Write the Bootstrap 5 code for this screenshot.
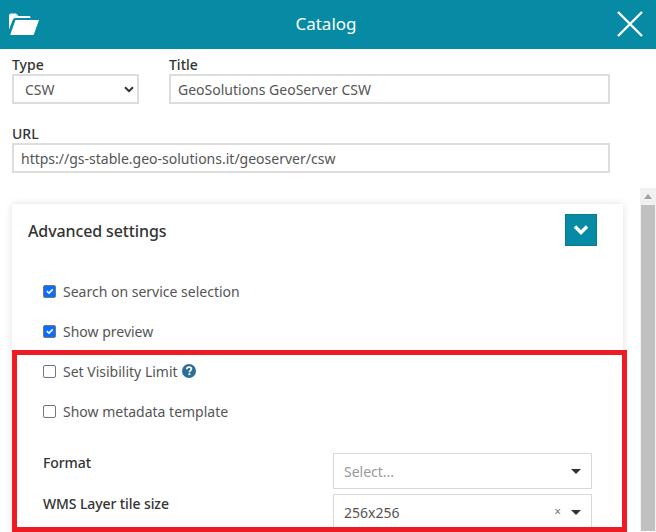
<!DOCTYPE html>
<html lang="en">
<head>
  <meta charset="UTF-8">
  <meta name="viewport" content="width=device-width, initial-scale=1.0">
  <title>Catalog</title>
  <link href="https://cdn.jsdelivr.net/npm/bootstrap@5.3.0/dist/css/bootstrap.min.css" rel="stylesheet">
  <style>
    html, body {
      height: 532px;
      overflow: hidden;
    }
    body {
      font-family: "Noto Sans", sans-serif;
      font-size: 14px;
      color: #333;
      background-color: #fff;
    }
    .cat-page {
      height: 532px;
      overflow: hidden;
    }
    .cat-header {
      height: 49px;
      background-color: #078aa3;
      color: #fff;
      font-size: 17px;
      padding: 0 12px 0 9px;
    }
    .cat-header svg {
      display: block;
      flex: none;
      margin-bottom: 1px;
    }
    .cat-header-title {
      flex: 1;
      text-align: center;
      padding-bottom: 2px;
      margin-left: -3px;
    }
    .cat-form {
      padding: 6px 46px 0 12px;
    }
    .cat-label {
      font-weight: 500;
      line-height: 19px;
      margin-bottom: 0;
      color: #333;
    }
    .cat-field {
      height: 30px;
      border: 2px solid #ddd;
      border-radius: 0;
      padding: 0 7px;
      font-size: 14px;
      color: #555;
      box-shadow: none;
    }
    .cat-type {
      width: 127px;
      padding-left: 11px;
      background-image: url("data:image/svg+xml,%3csvg xmlns='http://www.w3.org/2000/svg' viewBox='0 0 10 7'%3e%3cpath fill='none' stroke='%23333' stroke-width='2' d='M1 1.2l4 4 4-4'/%3e%3c/svg%3e");
      background-size: 10px 7px;
      background-position: right 3px center;
    }
    .cat-title {
      width: 441px;
    }
    .cat-url {
      margin-top: 20px;
    }
    .cat-scroll {
      margin-top: 15px;
      height: 343px;
    }
    .cat-main {
      width: 640px;
      padding: 16px 17px 0 12px;
    }
    .cat-panel {
      height: 400px;
      box-shadow: 0 0 8px rgba(0, 0, 0, 0.12);
      padding: 10px 26px 0 16px;
    }
    .cat-panel-title {
      font-size: 16px;
      font-weight: 500;
      line-height: 30px;
      color: #333;
      padding-top: 2px;
      letter-spacing: -0.12px;
    }
    .cat-toggle {
      width: 32px;
      height: 32px;
      padding: 0;
      border: 1px solid #067c93;
      border-radius: 0;
      background-color: #078aa3;
    }
    .cat-checks {
      margin-top: 25px;
      padding-left: 15px;
    }
    .cat-check {
      display: flex;
      align-items: center;
      height: 40px;
      margin: 0;
      padding: 0;
      color: #555;
    }
    .cat-check .form-check-input {
      width: 13px;
      height: 13px;
      margin: 0 7px 0 0;
      float: none;
      border-color: #767676;
      border-radius: 2px;
    }
    .cat-help {
      margin-left: 4px;
    }
    .cat-rows {
      margin-top: 22px;
      padding-left: 15px;
    }
    .cat-row {
      height: 41px;
    }
    .cat-row-label {
      font-weight: 500;
      width: 290px;
      color: #333;
      line-height: 19px;
      letter-spacing: -0.1px;
    }
    .cat-select {
      width: 259px;
      height: 36px;
      border: 1px solid #d8d8d8;
      padding: 0 10px;
      color: #555;
    }
    .cat-placeholder {
      color: #999;
    }
    .cat-caret {
      width: 0;
      height: 0;
      border-style: solid;
      border-width: 5px 5px 0;
      border-color: #333 transparent transparent;
    }
    .cat-clear {
      font-size: 12px;
      color: #777;
      margin-right: 10px;
    }
    .cat-track {
      width: 16px;
      background-color: #f1f1f1;
      padding: 0 1px 0 1px;
    }
    .cat-arrow {
      width: 0;
      height: 0;
      margin: 6px auto 6px;
      border-style: solid;
      border-width: 0 4px 5px;
      border-color: transparent transparent #a3a3a3;
    }
    .cat-thumb {
      height: 326px;
      background-color: #c1c1c1;
    }
    .cat-redbox {
      position: absolute;
      left: 12px;
      top: 350px;
      width: 615px;
      height: 182px;
      border: 5px solid #ed1c24;
      pointer-events: none;
    }
  </style>
</head>
<body>
  <div class="cat-page position-relative">
    <div class="cat-header d-flex align-items-center">
      <svg width="30" height="24" viewBox="0 0 30 24" fill="#fff">
        <path d="M0 3.5 C0 2.5 .8 1.5 1.8 1.5 H7 L9.5 4 H20 C21 4 21.5 4.6 21.5 5.5 V6 H6.5 C5 6 4.2 6.8 3.7 8 L0 17.5 Z"/>
        <path d="M6.5 8 H30 L25 22 C24.8 22.7 24.2 23 23.5 23 H1.2 Z"/>
      </svg>
      <span class="cat-header-title">Catalog</span>
      <svg width="28" height="28" viewBox="0 0 28 28" fill="none" stroke="#fff" stroke-width="2.4">
        <path d="M2 2 L26 26 M26 2 L2 26"/>
      </svg>
    </div>

    <form class="cat-form">
      <div class="d-flex">
        <div>
          <label class="cat-label d-block" for="catType">Type</label>
          <select class="form-select cat-field cat-type" id="catType">
            <option>CSW</option>
          </select>
        </div>
        <div class="ms-auto">
          <label class="cat-label d-block" for="catTitle">Title</label>
          <input class="form-control cat-field cat-title" id="catTitle" value="GeoSolutions GeoServer CSW">
        </div>
      </div>
      <div class="cat-url">
        <label class="cat-label d-block" for="catUrl">URL</label>
        <input class="form-control cat-field" id="catUrl" value="https://gs-stable.geo-solutions.it/geoserver/csw">
      </div>
    </form>

    <div class="cat-scroll d-flex">
      <div class="cat-main">
        <div class="cat-panel bg-white">
          <div class="d-flex align-items-center justify-content-between">
            <span class="cat-panel-title">Advanced settings</span>
            <button type="button" class="cat-toggle d-flex align-items-center justify-content-center">
              <svg width="16" height="12" viewBox="0 0 16 12" fill="none" stroke="#fff" stroke-width="3.4">
                <path d="M2 2.5 L8 8.5 L14 2.5"/>
              </svg>
            </button>
          </div>

          <div class="cat-checks">
            <label class="cat-check form-check">
              <input class="form-check-input" type="checkbox" checked>
              Search on service selection
            </label>
            <label class="cat-check form-check">
              <input class="form-check-input" type="checkbox" checked>
              Show preview
            </label>
            <label class="cat-check form-check">
              <input class="form-check-input" type="checkbox">
              Set Visibility Limit
              <svg class="cat-help" width="14" height="14" viewBox="0 0 14 14">
                <circle cx="7" cy="7" r="7" fill="#2b6f94"/>
                <path d="M4.7 5.3 C4.8 3.9 5.8 3.2 7.1 3.2 C8.5 3.2 9.4 4 9.4 5.1 C9.4 6.6 7.4 6.6 7.4 8.2" fill="none" stroke="#fff" stroke-width="1.7"/>
                <rect x="6.4" y="9.3" width="2" height="1.8" fill="#fff"/>
              </svg>
            </label>
            <label class="cat-check form-check">
              <input class="form-check-input" type="checkbox">
              Show metadata template
            </label>
          </div>

          <div class="cat-rows">
            <div class="cat-row d-flex align-items-start">
              <div class="cat-row-label">Format</div>
              <div class="cat-select d-flex align-items-center justify-content-between">
                <span class="cat-placeholder">Select...</span>
                <span class="cat-caret"></span>
              </div>
            </div>
            <div class="cat-row d-flex align-items-start">
              <div class="cat-row-label">WMS Layer tile size</div>
              <div class="cat-select d-flex align-items-center">
                <span class="flex-grow-1">256x256</span>
                <span class="cat-clear">×</span>
                <span class="cat-caret"></span>
              </div>
            </div>
          </div>
        </div>
      </div>
      <div class="cat-track">
        <div class="cat-arrow"></div>
        <div class="cat-thumb"></div>
      </div>
    </div>

    <div class="cat-redbox"></div>
  </div>
</body>
</html>
